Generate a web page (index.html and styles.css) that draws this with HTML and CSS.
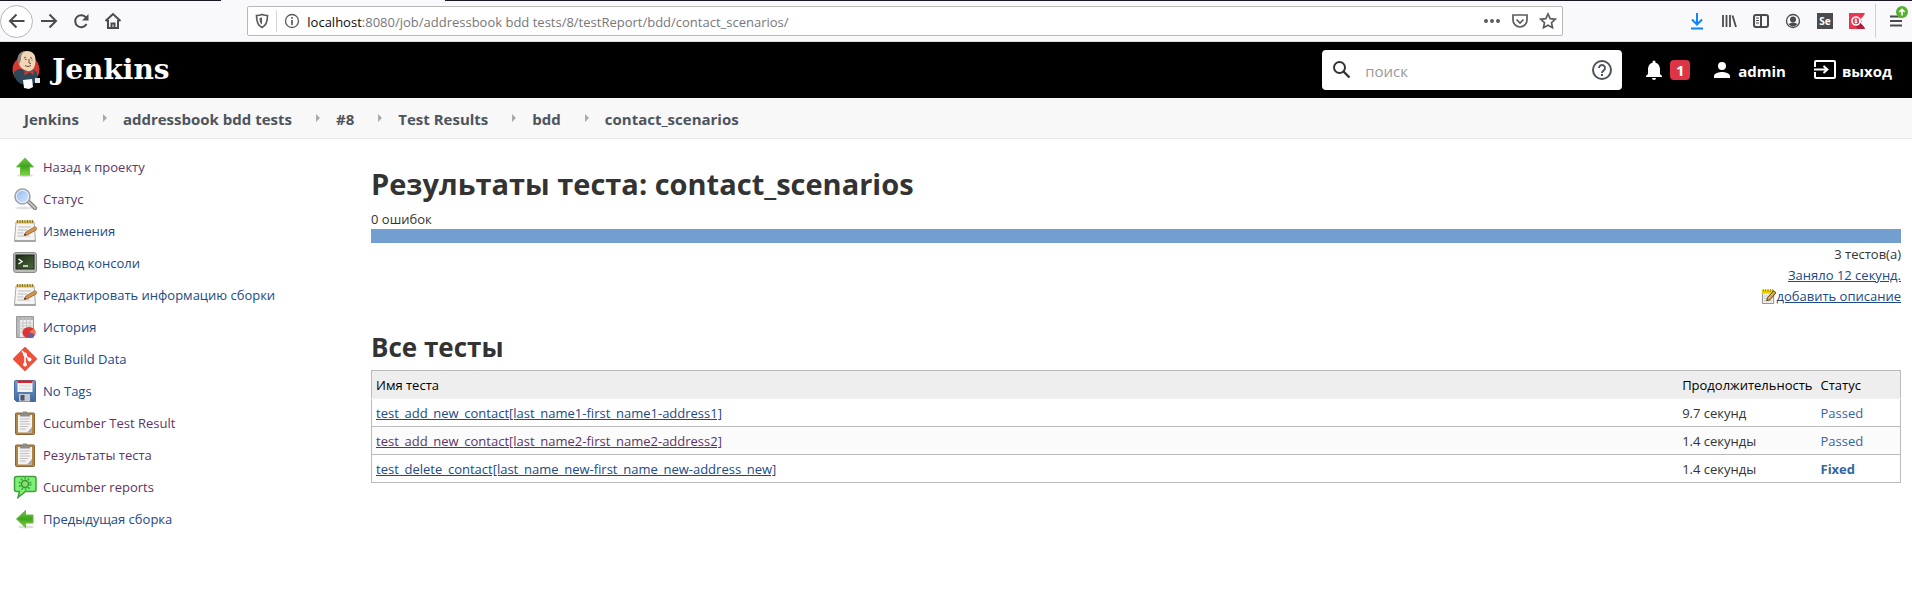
FILE: index.html
```html
<!DOCTYPE html>
<html lang="ru">
<head>
<meta charset="utf-8">
<title>Результаты теста: contact_scenarios [Jenkins]</title>
<link rel="stylesheet" href="styles.css">
</head>
<body>
<svg class="defs" aria-hidden="true">
  <defs>
    <linearGradient id="green" x1="0" y1="0" x2="0" y2="1"><stop offset="0" stop-color="#6cc644"/><stop offset="0.5" stop-color="#3fa51c"/><stop offset="1" stop-color="#7fd83f"/></linearGradient>
    <linearGradient id="screen" x1="0" y1="0" x2="1" y2="1"><stop offset="0" stop-color="#1d2a15"/><stop offset="1" stop-color="#4b6a3c"/></linearGradient>
    <linearGradient id="disk" x1="0" y1="0" x2="0" y2="1"><stop offset="0" stop-color="#6f9bd0"/><stop offset="1" stop-color="#44699c"/></linearGradient>
    <linearGradient id="lens" x1="0" y1="0" x2="1" y2="1"><stop offset="0" stop-color="#8db8f0"/><stop offset="1" stop-color="#dcebfc"/></linearGradient>
    <symbol id="i-up" viewBox="0 0 24 24"><ellipse cx="12" cy="20.500" rx="8" ry="1.500" fill="#ddd"/><path d="M12 3l8.500 9H16.500v8h-9v-8H3.500z" fill="url(#green)" stroke="#6cbf48"/></symbol>
    <symbol id="i-left" viewBox="0 0 24 24"><ellipse cx="13" cy="20" rx="8" ry="1.500" fill="#ddd"/><path d="M3.500 12l9-8.500V8H20v8h-7.500v4.500z" fill="url(#green)" stroke="#6cb548"/></symbol>
    <symbol id="i-search" viewBox="0 0 24 24"><ellipse cx="11" cy="21" rx="9" ry="1.500" fill="#e2e2e2"/><path d="M16 15l6 6" stroke="#777" stroke-width="4" stroke-linecap="round"/><path d="M16 15l6 6" stroke="#c4c4c4" stroke-width="2" stroke-linecap="round"/><circle cx="9.500" cy="9.500" r="7.500" fill="url(#lens)" stroke="#9aa2ab" stroke-width="1.600"/><circle cx="9.500" cy="9.500" r="6.200" fill="none" stroke="#f0f5fc"/></symbol>
    <symbol id="i-note" viewBox="0 0 24 24"><path d="M3 3h18l1.500 19h-21z" fill="#f4f4f2" stroke="#aaa"/><path d="M1.500 21h21v2h-21z" fill="#a5a5a5"/><path d="M3.500 1.500h17v3h-17z" fill="#d3b74c"/><path d="M4.500 1v3M7 1v3M9.500 1v3M12 1v3M14.500 1v3M17 1v3M19.500 1v3" stroke="#8b762b"/><path d="M5 8h13M5 11h9M4.500 14h6M4.500 17h12" stroke="#bbb"/><path d="M11 16.500l2-3.500 8.500-5c1.500-.5 3 1.500 1.500 3l-8 4.500z" fill="#dc944b" stroke="#8d5a2c" stroke-width=".8"/><path d="M11 16.500l1-2 1.500 1.500z" fill="#333"/></symbol>
    <symbol id="i-edit" viewBox="0 0 16 16"><path d="M1.500 2.500h12v13h-12z" fill="#eeeeec" stroke="#888"/><path d="M1 1h13v4H1z" fill="#edd400"/><path d="M2.500 0v3M5 0v3M7.500 0v3M10 0v3M12.500 0v3" stroke="#a08a1a"/><path d="M3 7.500h5M3 10h4M3 12.500h9" stroke="#c4c4c4"/><path d="M6 12.500l1-3.500L13.500 2l2.500 2-6.500 7.500z" fill="#e0a94d" stroke="#4d3c1c"/></symbol>
    <symbol id="i-term" viewBox="0 0 24 24"><rect x=".5" y="1.500" width="23" height="20" rx="2.500" fill="#b9bbb4" stroke="#8b8d87"/><rect x="3" y="4" width="18" height="14" fill="url(#screen)" stroke="#222"/><path d="M5.500 8l3.500 2.500L5.500 13M10 15h5" fill="none" stroke="#f0f5e8" stroke-width="1.500"/></symbol>
    <symbol id="i-hist" viewBox="0 0 24 24"><path d="M3.500 1.500h17v21h-17z" fill="#eee" stroke="#999"/><path d="M4 2h16v3H4zM4 2h3v20H4z" fill="#b5b5b5"/><path d="M4 8h16M4 11h16M4 14h16M4 17h16M10 2v20M13.500 2v20M17 2v20" stroke="#c6c6c6"/><ellipse cx="16" cy="17.500" rx="6.500" ry="5.500" fill="#d33"/><path d="M16 17l5-3.500a6 6 0 0 1 1 6z" fill="#e87a54"/><path d="M16 17l5.500 3.500a7 6 0 0 1-6 2.500z" fill="#496bb4"/></symbol>
    <symbol id="i-git" viewBox="0 0 24 24"><path d="M12 1l11 11-11 11L1 12z" fill="#ee513b" stroke="#ee513b" stroke-width="2" stroke-linejoin="round"/><path d="M9 4l3 3.500v10M12 8l4.500 4.500" fill="none" stroke="#fff" stroke-width="1.600"/><circle cx="12" cy="7.500" r="1.900" fill="#fff"/><circle cx="12" cy="17.500" r="2" fill="#fff"/><circle cx="16.500" cy="12.500" r="2" fill="#fff"/></symbol>
    <symbol id="i-disk" viewBox="0 0 24 24"><path d="M1.500 2.500q0-1 1-1h19q1 0 1 1v20h-19l-2-2z" fill="url(#disk)" stroke="#476a9f"/><path d="M4.500 2h15v11h-15z" fill="#f5f5f5"/><path d="M4.500 1.500h15v2.500h-15z" fill="#d22"/><path d="M6 7h12M6 10h12" stroke="#d5d5d5"/><path d="M6 15h11v7.500H6z" fill="#c7c9cb"/><path d="M7.500 16h4v5.500h-4z" fill="#42577b"/></symbol>
    <symbol id="i-clip" viewBox="0 0 24 24"><rect x="2.500" y="2" width="19" height="21.500" rx="1" fill="#b18443" stroke="#8b6630"/><path d="M5 4h14v17.500H5z" fill="#f2f2f2"/><path d="M19 16l-5 5.500h5z" fill="#aaa"/><path d="M7 8h10M7 10.500h9M7 13h10M7 15.500h8M7 18h6" stroke="#c2c2c2"/><path d="M7 5.500V3h2.500L10 .5h4l.5 2.500H17v2.500z" fill="#8b8e88"/></symbol>
    <symbol id="i-cuke" viewBox="0 0 24 24"><path d="M3.500 1.500h17.500q2 0 2 2v11q0 2-2 2h-8.500L5 22.500l1.500-6h-3q-2 0-2-2v-11q0-2 2-2z" fill="#7df075" stroke="#3f9f3c" stroke-width="1.500"/><circle cx="12" cy="9" r="3.500" fill="#8edb70" stroke="#2f9b31" stroke-width="1.500"/><circle cx="12" cy="9" r="5.500" fill="none" stroke="#37a63a" stroke-width="2" stroke-dasharray="1.500 2"/></symbol>
  </defs>
</svg>

<div class="browser">
  <div class="tabs"><span class="tab-edge"></span><span class="tab-active"></span><span class="tab-rest"></span></div>
  <div class="toolbar">
    <div class="nav">
      <button class="back" aria-label="Назад"><svg width="20" height="20" viewBox="0 0 20 20"><path d="M17.500 10H3M9.500 3.500L3 10l6.500 6.500" /></svg></button>
      <button aria-label="Вперёд"><svg width="20" height="20" viewBox="0 0 20 20"><path d="M2 10h15M10.500 3.500L17 10l-6.500 6.500"/></svg></button>
      <button aria-label="Обновить"><svg width="18" height="18" viewBox="0 0 18 18"><path d="M14.500 12A6 6 0 1 1 14 5.500"/><path d="M16.500 2v6.500H10z" fill="#4a4a4f" stroke="none"/></svg></button>
      <button aria-label="Домой"><svg width="18" height="18" viewBox="0 0 18 18"><path d="M1.500 9L9 2l7.500 7M4 8v8h10V8"/><path d="M7.500 15.500v-4h3v4" /></svg></button>
    </div>
    <span class="spacer"></span>
    <div class="urlbar">
      <svg width="14" height="16" viewBox="0 0 14 16"><path d="M7 1.500c2 .8 3.500 1 5.500 1 0 6-1 10-5.500 12C2.500 12.500 1.500 8.500 1.500 2.500c2 0 3.500-.2 5.500-1z"/><path d="M7 4.500v7C5 10.500 4.500 8 4.500 5z" fill="#5b5b5f" stroke="none"/></svg>
      <span class="url-sep"></span>
      <svg width="16" height="16" viewBox="0 0 16 16"><circle cx="8" cy="8" r="6.500" stroke-width="1.300"/><path d="M8 7v5M8 4v1.800"/></svg>
      <div class="url"><span class="host">localhost</span>:8080/job/addressbook bdd tests/8/testReport/bdd/contact_scenarios/</div>
      <svg width="18" height="18" viewBox="0 0 18 18"><g fill="#5b5b5f" stroke="none"><circle cx="3" cy="9" r="2"/><circle cx="9" cy="9" r="2"/><circle cx="15" cy="9" r="2"/></g></svg>
      <svg width="18" height="18" viewBox="0 0 18 18"><path d="M2 3h14v5a7 7 0 0 1-14 0zM5.500 7.500L9 11l3.500-3.500"/></svg>
      <svg width="18" height="18" viewBox="0 0 18 18"><path d="M9 2l2.200 4.600 5 .6-3.700 3.500 1 5L9 13.200l-4.500 2.500 1-5L1.800 7.200l5-.6z"/></svg>
    </div>
    <span class="spacer"></span>
    <div class="tools">
      <button aria-label="Загрузки"><svg width="16" height="18" viewBox="0 0 16 18"><path d="M8 1v11M3 7.500l5 5 5-5M2 16.500h12" stroke="#0a84ff"/></svg></button>
      <button aria-label="Библиотека"><svg width="16" height="16" viewBox="0 0 16 16"><path d="M2 2v12M5.500 2v12M9 2v12M11.500 2.500l3.500 11.500" stroke-width="1.800"/></svg></button>
      <button aria-label="Боковая панель"><svg width="16" height="16" viewBox="0 0 16 16"><rect x="1" y="2" width="14" height="12" rx="2"/><path d="M8 2v12"/><path d="M3 5h3M3 7.500h3M3 10h3" stroke-width="1"/></svg></button>
      <button aria-label="Аккаунт"><svg width="16" height="16" viewBox="0 0 16 16"><circle cx="8" cy="8" r="6.500" stroke-width="1.300"/><circle cx="8" cy="6.500" r="3" fill="#4a4a4f" stroke="none"/><path d="M3.500 11q4.500-3 9 0-4.500 5-9 0z" fill="#4a4a4f" stroke="none"/></svg></button>
      <button class="selenium" aria-label="Selenium">Se</button>
      <button aria-label="Katalon"><svg width="16" height="16" viewBox="0 0 16 16"><path d="M0 0h16l-4 8 4 8H0z" fill="#e8384f" stroke="none"/><path d="M5 12l7-4 4 8H9z" fill="#b71c38" stroke="none"/><path d="M15.500 3l-5 5 5 5" stroke="#fff" stroke-width="1.200"/><circle cx="7" cy="8" r="4" stroke="#fff" stroke-width="1.600"/><path d="M6 6h1.500v1.500H6zM6 8.500h2V10H6z" fill="#fff" stroke="#fff" stroke-width=".6"/></svg></button>
      <span class="tool-sep"></span>
      <button class="menu" aria-label="Меню"><svg width="24" height="32" viewBox="0 0 24 32"><path d="M6 11.500h12M6 16h12M6 20.500h12"/><circle cx="18" cy="7" r="6" fill="#57b030" stroke="none"/><path d="M18 10.500v-6M15.300 7L18 4.300 20.700 7" stroke="#fff" stroke-width="1.600"/></svg></button>
    </div>
  </div>
</div>

<header class="header">
  <a class="logo" href="#">
    <svg width="29" height="40" viewBox="0 0 29 40"><ellipse cx="14" cy="19.500" rx="13.500" ry="13.500" fill="#d33833"/><path d="M2 22c3-3 7-4 11-3l9 1c4 2 4 7 2 11l-4 4-11-1c-5-3-7-7-7-12z" fill="#2e4658"/><path d="M6 10c0-6 4-9 9-9s8.500 3 8.500 9-2 11-7 11.500C10 20 7 17 6 10z" fill="#f0d6b7"/><path d="M5.500 11C5 4 9 1.300 13 1.200 9.500 3 9 6 9 9.500L7.500 14z" fill="#8b8176"/><path d="M12 8l2-1M18 7.500l2 .8M17 9v4l2 .5M13 15.500c2 1.500 4 1 6 0M13 9.500h1.500M19.500 10h1" fill="none" stroke="#6b4b36"/><path d="M12.500 20l5 2-5 3.500zM17.500 22l4-2v5z" fill="#d33833"/><path d="M11 30l9-1 1 8-4 2-5-1z" fill="#fff"/><path d="M23 28h5v5h-5z" fill="#e6e6e6"/></svg>
    <span class="wordmark">Jenkins</span>
  </a>
  <form class="search">
    <svg width="24" height="24" viewBox="0 0 24 24"><circle cx="9.500" cy="9.500" r="5.500" fill="none" stroke="#333" stroke-width="2"/><path d="M13.500 13.500l6 6" stroke="#333" stroke-width="2.400"/></svg>
    <input type="text" placeholder="поиск" aria-label="поиск">
    <svg width="24" height="24" viewBox="0 0 24 24"><circle cx="12" cy="12" r="9" fill="none" stroke="#4d545d" stroke-width="2"/><path d="M9 10a3 3 0 1 1 4.500 2.600Q12 13.600 12 15" fill="none" stroke="#4d545d" stroke-width="1.900"/><path d="M11 16h2v2h-2z" fill="#4d545d"/></svg>
  </form>
  <a class="alerts" href="#" aria-label="Уведомления"><svg width="24" height="24" viewBox="0 0 24 24"><path d="M12 22a2 2 0 0 0 2-2h-4a2 2 0 0 0 2 2zm6-6v-5c0-3.070-1.630-5.640-4.500-6.320V4a1.500 1.500 0 0 0-3 0v.68C7.640 5.360 6 7.920 6 11v5l-2 2v1h16v-1z" fill="#fff"/></svg><span class="badge">1</span></a>
  <a class="user" href="#"><svg width="24" height="24" viewBox="0 0 24 24"><path d="M12 12a4 4 0 1 0 0-8 4 4 0 0 0 0 8zm0 2c-2.670 0-8 1.340-8 4v2h16v-2c0-2.660-5.330-4-8-4z" fill="#fff"/></svg><span class="label">admin</span></a>
  <a class="exit" href="#"><svg width="22" height="20" viewBox="0 0 22 20"><path d="M1 7V2q0-1 1-1h18q1 0 1 1v15q0 1-1 1H2q-1 0-1-1v-5" fill="none" stroke="#fff" stroke-width="2"/><path d="M0 9.500h13M9.500 6l4 3.500-4 3.500" fill="none" stroke="#fff" stroke-width="1.900"/></svg><span class="label">выход</span></a>
</header>

<nav class="crumbs">
  <a href="#">Jenkins</a><i></i>
  <a href="#">addressbook bdd tests</a><i></i>
  <a href="#">#8</a><i></i>
  <a href="#">Test Results</a><i></i>
  <a href="#">bdd</a><i></i>
  <a href="#">contact_scenarios</a>
</nav>

<div class="page">
  <nav class="tasks">
    <a class="visited" href="#"><svg><use href="#i-up"/></svg>Назад к проекту</a>
    <a class="visited" href="#"><svg><use href="#i-search"/></svg>Статус</a>
    <a href="#"><svg><use href="#i-note"/></svg>Изменения</a>
    <a href="#"><svg><use href="#i-term"/></svg>Вывод консоли</a>
    <a href="#"><svg><use href="#i-note"/></svg>Редактировать информацию сборки</a>
    <a href="#"><svg><use href="#i-hist"/></svg>История</a>
    <a href="#"><svg><use href="#i-git"/></svg>Git Build Data</a>
    <a href="#"><svg><use href="#i-disk"/></svg>No Tags</a>
    <a class="visited" href="#"><svg><use href="#i-clip"/></svg>Cucumber Test Result</a>
    <a class="visited" href="#"><svg><use href="#i-clip"/></svg>Результаты теста</a>
    <a class="visited" href="#"><svg><use href="#i-cuke"/></svg>Cucumber reports</a>
    <a href="#"><svg><use href="#i-left"/></svg>Предыдущая сборка</a>
  </nav>
  <main>
    <h1>Результаты теста: contact_scenarios</h1>
    <p class="failures">0 ошибок</p>
    <div class="bar"></div>
    <div class="summary">
      <span>3 тестов(а)</span>
      <a href="#">Заняло 12 секунд.</a>
      <span class="describe"><svg><use href="#i-edit"/></svg><a href="#">добавить описание</a></span>
    </div>
    <h2>Все тесты</h2>
    <table>
      <thead><tr><th>Имя теста</th><th class="duration">Продолжительность</th><th class="status">Статус</th></tr></thead>
      <tbody>
        <tr><td><a href="#">test_add_new_contact[last_name1-first_name1-address1]</a></td><td>9.7 секунд</td><td class="passed">Passed</td></tr>
        <tr><td><a class="visited" href="#">test_add_new_contact[last_name2-first_name2-address2]</a></td><td>1.4 секунды</td><td class="passed">Passed</td></tr>
        <tr><td><a href="#">test_delete_contact[last_name_new-first_name_new-address_new]</a></td><td>1.4 секунды</td><td class="fixed">Fixed</td></tr>
      </tbody>
    </table>
  </main>
</div>
</body>
</html>
```

FILE: styles.css
```css
* { box-sizing: border-box; }
body { margin: 0; background: #fff; color: #333; font: 13px/21px "Open Sans", "Noto Sans", sans-serif; }
a { color: #204a87; }
a.visited { color: #5c3566; }
button { border: 0; padding: 0; background: none; }
.defs { position: absolute; width: 0; height: 0; }

.browser { background: #f9f9fb; border-bottom: 1px solid #ddd; }
.tabs { display: flex; height: 1px; }
.tab-edge { width: 221px; background: #1c1624; }
.tab-active { width: 224px; }
.tab-rest { flex: 1; background: #1c1624; }
.toolbar { display: flex; align-items: center; height: 40px; }
.toolbar svg { display: block; flex: none; fill: none; stroke: #4a4a4f; stroke-width: 2; }
.nav { display: flex; align-items: center; }
.nav button { display: grid; place-items: center; width: 32px; height: 32px; }
.nav .back { width: 33px; height: 33px; border: 1px solid #b5b5b8; border-radius: 50%; background: #fff; }
.spacer { flex: 1; }
.urlbar { flex: 11; display: flex; align-items: center; gap: 7px; height: 30px; padding: 0 5px 0 7px; border: 1px solid #b8b8b8; border-radius: 2px; background: #fff; }
.toolbar .urlbar svg { stroke: #5b5b5f; stroke-width: 1.7; }
.url-sep { width: 1px; height: 22px; background: #d7d7db; }
.url { flex: 1; padding-top: 2px; color: #77777a; white-space: nowrap; }
.url + svg, .url + svg + svg { margin-right: 3px; }
.host { color: #0c0c0d; }
.tools { display: flex; align-items: center; }
.tools button { display: grid; place-items: center; width: 32px; height: 32px; }
.tools .selenium { width: 16px; height: 16px; margin: 0 8px; background: #4a4a4f; color: #fff; font: bold 10px/16px "Open Sans", sans-serif; }
.tool-sep { width: 1px; height: 34px; margin: 0 4px 0 2px; background: #d0d0d4; }

.header { display: flex; align-items: center; height: 56px; padding: 0 20px 0 12px; background: #000; }
.header a { display: flex; align-items: center; color: #fff; font-size: 15px; font-weight: bold; text-decoration: none; }
.header .logo { gap: 11px; margin-right: auto; }
.header .label { padding-top: 2px; }
.wordmark { font: bold 28px/40px "DejaVu Serif", serif; }
.search { display: flex; align-items: center; width: 300px; height: 40px; padding: 0 8px; border-radius: 4px; background: #fff; }
.search input { flex: 1; min-width: 0; margin-left: 11px; padding: 2px 0 0; border: 0; outline: 0; background: none; color: #333; font: 15px "Open Sans", sans-serif; }
.search input::placeholder { color: #999; }
.alerts { gap: 4px; margin-left: 20px; }
.badge { width: 20px; border-radius: 4px; background: #dc3545; line-height: 20px; text-align: center; }
.user { gap: 4px; margin-left: 20px; }
.exit { gap: 6px; margin-left: 28px; }

.crumbs { display: flex; align-items: center; height: 41px; padding: 2px 0 0 24px; border-bottom: 1px solid #e8e8e8; background: #f8f8f8; }
.crumbs a { color: #4d545d; font-size: 15px; font-weight: bold; text-decoration: none; }
.crumbs i { margin: 0 16px 2px 24px; border: 4px solid transparent; border-right: 0; border-left-color: #aaa; }

.page { display: flex; }
.tasks { flex: none; display: flex; flex-direction: column; width: 371px; padding: 12px 0 0 13px; }
.tasks a { display: flex; align-items: center; gap: 6px; height: 32px; text-decoration: none; }
.tasks svg { width: 24px; height: 24px; }
main { flex: 1; padding: 24px 11px 0 0; }
h1 { margin: 0; font-size: 29px; line-height: 42px; }
.failures { margin: 4px 0 0; line-height: 20px; }
.bar { height: 14px; background: #729fcf; }
.summary { display: flex; flex-direction: column; align-items: flex-end; padding-top: 1px; }
.describe { display: flex; align-items: center; }
.describe svg { width: 15px; height: 15px; }
h2 { margin: 23px 0 6px; font-size: 26px; line-height: 34px; }
table { width: 100%; border: 1px solid #bbb; border-collapse: collapse; }
th, td { height: 28px; padding: 2px 4px 0; text-align: left; white-space: nowrap; }
th { background: #eee; color: #000; font-weight: normal; }
td { border-top: 1px solid #bbb; }
tbody tr:first-child td { border-top-color: #f2f2f2; }
tbody tr:nth-child(even) { background: #fbfbfb; }
.duration { width: 1px; }
.status { width: 84px; }
.passed, .fixed { color: #3465a4; }
.fixed { font-weight: bold; }
```
